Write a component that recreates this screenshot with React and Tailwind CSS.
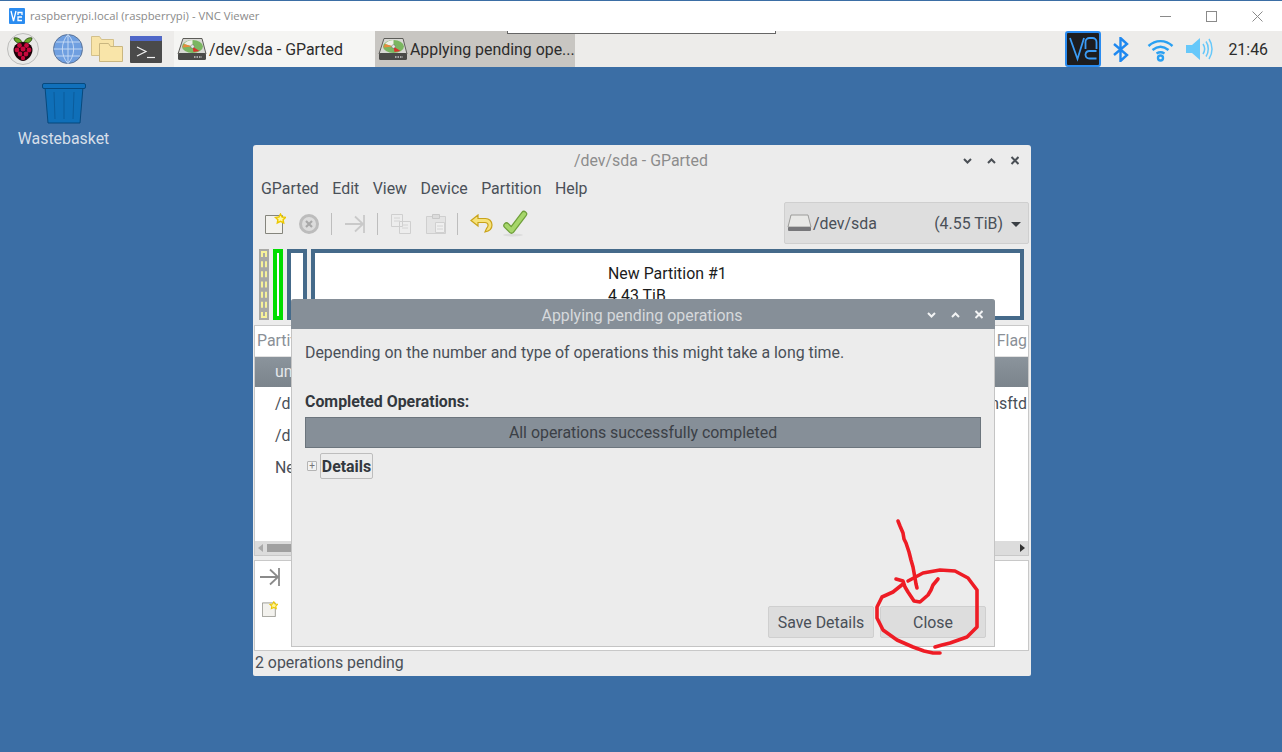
import React from 'react';

function VncBadge({ size = 16 }) {
  return (
    <svg width={size} height={size} viewBox="0 0 16 16">
      <rect width="16" height="16" rx="1" fill="#2b8cf0" />
      <path d="M2 3l2.500 10L7 3M9 7V4.500h4V7M13 9H9v3.500h4" fill="none" stroke="#fff" strokeWidth="1.300" />
    </svg>
  );
}

function Raspberry() {
  return (
    <svg width="32" height="32" viewBox="0 0 32 32">
      <circle cx="16" cy="16" r="15.500" fill="#e9e9e7" stroke="#bdbdbb" />
      <path d="M15.500 10C14 6 10 4 7 5c0 3 3 6 8.500 5zM16.500 10C18 6 22 4 25 5c0 3-3 6-8.500 5z" fill="#6aa82a" stroke="#1f3d0c" strokeWidth=".8" />
      <path d="M16 9c5 0 9.500 3 9.500 8 0 5-5 11-9.500 11S6.500 22 6.500 17c0-5 4.500-8 9.500-8z" fill="#1d0309" />
      <g fill="#c8083c">
        <circle cx="12.500" cy="12.500" r="2.400" />
        <circle cx="19.500" cy="12.500" r="2.400" />
        <circle cx="16" cy="16" r="2.500" />
        <circle cx="10" cy="17" r="2.400" />
        <circle cx="22" cy="17" r="2.400" />
        <circle cx="13" cy="21" r="2.400" />
        <circle cx="19" cy="21" r="2.400" />
        <circle cx="16" cy="25" r="2.200" />
      </g>
    </svg>
  );
}

function Globe() {
  return (
    <svg width="30" height="30" viewBox="0 0 30 30">
      <circle cx="15" cy="15" r="14.500" fill="#6f9fe0" stroke="#5b7396" />
      <path d="M15 .5c-7.500 8-7.500 21 0 29M15 .5c7.500 8 7.500 21 0 29M15 .5v29M.5 15h29M3 8h24M3 22h24" fill="none" stroke="#c9dcf5" strokeWidth=".9" />
    </svg>
  );
}

function Folders() {
  return (
    <svg width="32" height="26" viewBox="0 0 32 26">
      <path d="M.5.5h8l2 3h12v16H.5z" fill="#f8e4a8" stroke="#d3c08a" />
      <path d="M8.500 7.500h9l2 3h12v15h-23z" fill="#f9e5a9" stroke="#c9b680" />
    </svg>
  );
}

function Terminal() {
  return (
    <svg width="32" height="27" viewBox="0 0 32 27">
      <rect width="32" height="27" rx="1" fill="#4a4a4a" />
      <rect width="32" height="5" rx="1" fill="#5068c8" />
      <path d="M7 11l9 4.500L7 20" fill="none" stroke="#f2f2f2" strokeWidth="1.200" />
      <path d="M17 21.500h8" stroke="#f2f2f2" strokeWidth="1.200" />
    </svg>
  );
}

function DiskGauge() {
  return (
    <svg width="30" height="22" viewBox="0 0 30 22">
      <path d="M6 .5h19L29 16H1z" fill="#d8d8d4" stroke="#5c5c58" />
      <ellipse cx="15.500" cy="8.500" rx="10.500" ry="6.500" fill="#7bb661" />
      <path d="M15.500 8.500L7 6a10.500 6.500 0 0 1 8.500-4z" fill="#f0efe8" />
      <path d="M15.500 8.500L7 6l-1.500 3.500z" fill="#e88a3c" />
      <path d="M15.500 8.500l7 4.500-6 1z" fill="#d9332b" />
      <circle cx="15.500" cy="8.500" r="1.800" fill="#e8e8e8" stroke="#666" strokeWidth=".5" />
      <rect x="1" y="15" width="28" height="7" rx="1.500" fill="#4a4a48" />
      <path d="M17 19h8" stroke="#c8c8c8" strokeWidth="1.400" strokeDasharray="1.500 1" />
    </svg>
  );
}

function NewDoc({ small }) {
  return (
    <svg width={small ? 16 : 21} height={small ? 16 : 21} viewBox="0 0 21 21">
      <path d="M.5 2.500h17v18H.5z" fill="#f3f2ee" stroke="#85857d" />
      <path d="M15.500 1l1.600 3 3.400.4-2.400 2.300.6 3.300-3.200-1.600-3.200 1.600.6-3.300-2.400-2.300 3.400-.4z" fill="#fff6a0" stroke="#ecc800" strokeWidth="1.400" />
    </svg>
  );
}

function ApplyArrow({ color = '#c9c9c9' }) {
  return (
    <svg width="20" height="18" viewBox="0 0 20 18">
      <path d="M0 9h18M10 1.500L18 9l-8 7.500M19 0v18" fill="none" stroke={color} strokeWidth="1.800" />
    </svg>
  );
}

function TreeHeader() {
  return (
    <div className="h-[31px] shrink-0 bg-white border-b border-[#e2e2e2] flex justify-between items-center pl-[2px] pr-px text-[#8a9097]">
      <span>Partition</span>
      <span>Flag</span>
    </div>
  );
}

function GpartedWindow() {
  return (
    <div className="absolute left-[253px] top-[78px] w-[778px] h-[531px] bg-[#ececec] rounded-t-[3px] rounded-b-[2px] flex flex-col px-px">
      <div className="h-[29px] pt-[2px] shrink-0 relative flex items-center justify-center text-[#8c8c8c] pr-[2px]">
        /dev/sda - GParted
        <WinButtons color="#4a4f55" position="top-[11px] right-[11px]" />
      </div>
      <div className="h-[28px] pt-[2px] shrink-0 flex items-center gap-[13.5px] pl-[7px] text-[#4a5058]">
        <span>GParted</span>
        <span>Edit</span>
        <span>View</span>
        <span>Device</span>
        <span>Partition</span>
        <span>Help</span>
      </div>
      <div className="h-[43px] shrink-0 flex items-center pl-[11px] pr-px relative">
        <NewDoc />
        <svg className="ml-[13px]" width="20" height="20" viewBox="0 0 20 20">
          <circle cx="10" cy="10" r="8.500" fill="#dcdcdc" stroke="#bcbcbc" strokeWidth="3" />
          <path d="M7 7l6 6M13 7l-6 6" stroke="#a8a8a8" strokeWidth="2.200" />
        </svg>
        <div className="w-px h-[22px] bg-[#bdbdbd] ml-[12px]" />
        <div className="ml-[13px] flex"><ApplyArrow /></div>
        <div className="w-px h-[22px] bg-[#bdbdbd] ml-[12px]" />
        <svg className="ml-[13px]" width="20" height="20" viewBox="0 0 20 20">
          <path d="M.5.500h11v12H.5zM8.500 7.500h11v12h-11z" fill="#ededed" stroke="#cfcfcf" />
          <path d="M3 4h6M3 7h6M11 11h6M11 14h6" stroke="#d4d4d4" />
        </svg>
        <svg className="ml-[15px]" width="20" height="21" viewBox="0 0 20 21">
          <path d="M.5 3.500h19v17H.5z" fill="#e4e4e4" stroke="#cfcfcf" />
          <path d="M6.500 1.500h7v4h-7z" fill="#dcdcdc" stroke="#c8c8c8" />
          <path d="M9.500 9.500h9v10h-9z" fill="#efefef" stroke="#d0d0d0" />
          <path d="M11 13h6M11 16h6" stroke="#d4d4d4" />
        </svg>
        <div className="w-px h-[22px] bg-[#bdbdbd] ml-[11px]" />
        <svg className="ml-[12px]" width="23" height="20" viewBox="0 0 23 20">
          <path d="M8 1L1 6.500 8 12V8.500h7c3.500 0 4 3.500 1.500 6L15 18c5-1 7-4 7-7 0-4-3-6.500-6.500-6.500H8z" fill="#f6e27a" stroke="#c9a31a" strokeWidth="1.200" />
        </svg>
        <svg className="ml-[10px]" width="25" height="27" viewBox="0 0 25 27" fill="none" strokeLinecap="round" strokeLinejoin="round">
          <ellipse cx="10" cy="25" rx="10" ry="1.500" fill="#dcdcdc" />
          <path d="M3.500 15.500l5 5L21 4" stroke="#6f9f3a" strokeWidth="6.500" />
          <path d="M3.500 15.500l5 5L21 4" stroke="#a6d66a" strokeWidth="4" />
        </svg>
        <div className="absolute right-[1px] top-0 w-[245px] h-[42px] bg-[#dedede] border border-[#cfcfcf] rounded-[2px] flex items-center pl-[2px] pr-[7px] text-[#4a5058]">
          <svg width="25" height="18" viewBox="0 0 25 18">
            <path d="M4 1h17l3 12H1z" fill="#e8e8e6" stroke="#9c9c9a" />
            <rect x="1" y="13" width="23" height="4" rx="1" fill="#77777a" />
          </svg>
          <span className="ml-[1px] mt-[2px]">/dev/sda</span>
          <span className="ml-auto mt-[2px]">(4.55 TiB)</span>
          <span className="ml-[8px] mt-[2px] w-0 h-0 border-x-[5px] border-x-transparent border-t-[5px] border-t-[#3a3f44]" />
        </div>
      </div>
      <div className="h-[71px] mt-[4px] shrink-0 flex pl-[5px] pr-[6px]">
        <div className="w-[10px] bg-[#a9a9a6] p-[2px] flex">
          <div className="flex-1 border-2 border-dashed border-[#f7f29a]" />
        </div>
        <div className="w-[10px] ml-[4px] border-[4px] border-[#00dd00] bg-white" />
        <div className="w-[20px] ml-[4px] border-[4px] border-[#456a8a] bg-white" />
        <div className="flex-1 ml-[4px] border-[4px] border-[#456a8a] bg-white flex flex-col text-[#1c1c1c] leading-[22px] pt-[10px] pl-[293px]">
          <span>New Partition #1</span>
          <span>4.43 TiB</span>
        </div>
      </div>
      <div className="h-[231px] mt-[5px] mr-px shrink-0 bg-white border border-[#c8c8c8] flex flex-col text-[#4a5058] overflow-hidden">
        <TreeHeader />
        <div className="h-[30px] shrink-0 bg-linear-to-b from-[#8b949c] to-[#7b848c] text-[#e6e8ea] pl-[20px] leading-[30px]">un</div>
        <div className="flex justify-between h-[32px] leading-[32px] pl-[20px] mt-px">
          <span>/d</span>
          <span className="pr-[1px]">nsftd</span>
        </div>
        <div className="h-[32px] leading-[32px] pl-[20px]">/d</div>
        <div className="h-[32px] leading-[32px] pl-[20px]">Ne</div>
        <div className="mt-auto h-[14px] bg-[#dcdcdc] flex items-center px-[3px]">
          <span className="w-0 h-0 border-y-[4px] border-y-transparent border-r-[5px] border-r-[#aaaaaa]" />
          <span className="ml-[4px] w-[40px] h-[8px] bg-[#a0a0a0]" />
          <span className="ml-auto w-0 h-0 border-y-[4px] border-y-transparent border-l-[5px] border-l-[#333]" />
        </div>
      </div>
      <div className="h-[91px] mt-[4px] mr-px shrink-0 bg-white border border-[#c8c8c8] pl-[5px] pt-[7px]">
        <ApplyArrow color="#8a8a8a" />
        <div className="mt-[15px] ml-[2px]"><NewDoc small /></div>
      </div>
      <div className="flex-1 pl-px pb-[2px] flex items-center text-[#4a5058]">2 operations pending</div>
    </div>
  );
}

function WinButtons({ color, position }) {
  return (
    <svg className={`absolute ${position}`} width="56" height="10" viewBox="0 0 56 10" fill="none" stroke={color} strokeWidth="2">
      <path d="M1 3l3.500 3.500L8 3" />
      <path d="M25 7l3.500-3.500L32 7" />
      <path d="M48.500 1l7 7M55.500 1l-7 7" />
    </svg>
  );
}

function DialogWindow() {
  return (
    <div className="absolute left-[291px] top-[232px] w-[704px] h-[348px] bg-[#ececec] border-b border-x border-[#c4c4c4] rounded-t-[3px] flex flex-col text-[#4a5058]">
      <div className="h-[30px] pt-[3px] pr-[2px] -mx-px shrink-0 bg-[#868f98] rounded-t-[3px] relative flex items-center justify-center text-[#d6d9dc]">
        Applying pending operations
        <WinButtons color="#f2f3f4" position="top-[11px] right-[12px]" />
      </div>
      <div className="flex-1 px-[13px] flex flex-col">
        <p className="mt-[14px] leading-[20px]">Depending on the number and type of operations this might take a long time.</p>
        <p className="mt-[29px] font-bold text-[#33383e] leading-[20px]">Completed Operations:</p>
        <div className="mt-[5px] h-[31px] bg-[#868f98] border border-[#6c757d] flex items-center justify-center text-[#3b4046]">All operations successfully completed</div>
        <div className="mt-[5px] flex items-center">
          <span className="ml-[2px] w-[10px] h-[10px] border border-[#b4b4b4] rounded-[1px] bg-[#f2f2f2] flex items-center justify-center text-[#777] text-[10px] leading-none">+</span>
          <span className="ml-[3px] w-[53px] h-[26px] pt-[2px] border border-[#bdbdbd] rounded-[2px] font-bold text-[#33383e] flex items-center justify-center">Details</span>
        </div>
        <div className="mt-auto mb-[8px] -mr-[5px] flex justify-end gap-[6px]">
          <span className="w-[106px] h-[32px] pt-[2px] bg-[#dddddd] border border-[#cfcfcf] rounded-[2px] flex items-center justify-center">Save Details</span>
          <span className="w-[106px] h-[32px] pt-[2px] bg-[#dddddd] border border-[#cfcfcf] rounded-[2px] flex items-center justify-center">Close</span>
        </div>
      </div>
    </div>
  );
}

export default function App() {
  return (
    <div className="w-[1282px] h-[752px] relative overflow-hidden flex flex-col bg-[#3b6ea5] font-['Roboto',sans-serif] text-[15.9px]">
      {/* VNC Viewer title bar */}
      <div className="h-[31px] shrink-0 bg-white border-t border-[#3b6ea5] flex items-center pl-[9px]">
        <VncBadge />
        <span className="ml-[5px] font-['Open_Sans',sans-serif] text-[11.3px] text-[#8a8a8a]">raspberrypi.local (raspberrypi) - VNC Viewer</span>
        <div className="ml-auto flex items-center gap-[35px] pr-[19px]">
          <span className="w-[11px] h-px bg-[#8a8a8a]" />
          <span className="w-[11px] h-[11px] border border-[#8a8a8a]" />
          <svg width="11" height="11" viewBox="0 0 11 11"><path d="M.5.500l10 10M10.500.500l-10 10" stroke="#8a8a8a" /></svg>
        </div>
      </div>
      {/* Pi panel */}
      <div className="h-[36px] shrink-0 bg-[#edecea] flex items-center relative text-[#2c2c2c]">
        <div className="absolute left-[507px] top-0 w-[269px] h-[3px] bg-white border-b border-x border-[#666]" />
        <div className="ml-[7px] flex"><Raspberry /></div>
        <div className="ml-[14px] flex"><Globe /></div>
        <div className="ml-[8px] flex"><Folders /></div>
        <div className="ml-[7px] flex"><Terminal /></div>
        <div className="ml-[12px] w-[201px] h-[36px] bg-[#f5f5f3] flex items-center pl-[3px] gap-[2px]">
          <DiskGauge />
          <span className="mt-[2px]">/dev/sda - GParted</span>
        </div>
        <div className="w-[200px] h-[36px] bg-[#c8c6c2] flex items-center pl-[3px] gap-[2px] overflow-hidden whitespace-nowrap">
          <DiskGauge />
          <span className="mt-[2px]">Applying pending ope...</span>
        </div>
        <div className="ml-auto flex items-center pr-[14px]">
          <svg width="36" height="36" viewBox="0 0 36 36">
            <rect x="1" y="1" width="34" height="34" rx="2" fill="#1d1d1f" stroke="#2b8cf0" strokeWidth="2" />
            <path d="M5 7l7.500 21L19 7M20.500 18v-7a4 4 0 0 1 4-4h3a4 4 0 0 1 4 4v7M31.500 20H24.500a4 4 0 0 0-4 3.500v.5a4 4 0 0 0 4 3.500h7" fill="none" stroke="#3b9cf5" strokeWidth="1.800" />
          </svg>
          <svg className="ml-[12px]" width="16" height="25" viewBox="0 0 16 25">
            <path d="M1 7l13 11-6.500 6V1L14 7 1 18" fill="none" stroke="#1e88f0" strokeWidth="2.400" />
          </svg>
          <svg className="ml-[18px]" width="27" height="25" viewBox="0 0 27 25" fill="none" stroke="#2aa0f2" strokeWidth="2.400">
            <path d="M1.500 9c7-6.500 17-6.500 24 0M5.500 13c5-4 11-4 16 0M9.500 16.500c2.500-1.500 5.500-1.500 8 0" />
            <circle cx="13.500" cy="21" r="2.500" />
          </svg>
          <svg className="ml-[12px]" width="27" height="24" viewBox="0 0 27 24">
            <path d="M0 8h6l8-7v22l-8-7H0z" fill="#66c8fa" />
            <path d="M17 7c2 3 2 7 0 10M20 4.500c3 4 3 11 0 15M23 2c4 6 4 14 0 20" fill="none" stroke="#66c8fa" strokeWidth="1.500" />
          </svg>
          <span className="ml-[15px] mt-[2px] text-[#2c2c2c]">21:46</span>
        </div>
      </div>
      {/* Desktop */}
      <div className="flex-1 relative">
        <div className="absolute left-[18px] top-[16px] w-[91px] flex flex-col items-center text-[#d6dfe9]">
          <svg width="44" height="41" viewBox="0 0 44 41">
            <path d="M3 4h38l-3 36H6z" fill="#0f6fb8" stroke="#07497d" />
            <path d="M12 9l1 27M22 9v27M32 9l-1 27" stroke="#0b5c9c" />
            <rect x=".5" y=".5" width="43" height="5" rx="1.500" fill="#1170bb" stroke="#07497d" />
          </svg>
          <span className="mt-[5px] leading-[19px]">Wastebasket</span>
        </div>
        <GpartedWindow />
        <DialogWindow />
      </div>
      {/* Red freehand mark */}
      <svg className="absolute inset-0 pointer-events-none" width="1282" height="752" fill="none" stroke="#ee1c25" strokeWidth="3.600" strokeLinecap="round" strokeLinejoin="round">
        <path d="M898 521L900 526L903 533L904 539L906 543L909 552L911 560L913 567L915 578L916 584L917 588" />
        <path d="M896 579L903 581L905 587L908 592L914 601L920 602L928 595L931 590L933 585L938 579" />
        <path d="M903 584L893 592L882 597L877 607L877 618L883 630L897 640L913 647L924 651L933 653L940 653" />
        <path d="M935 647L942 645L950 643L967 637L977 627L977 590L968 578L955 571L940 570L923 573L908 581" />
      </svg>
    </div>
  );
}
